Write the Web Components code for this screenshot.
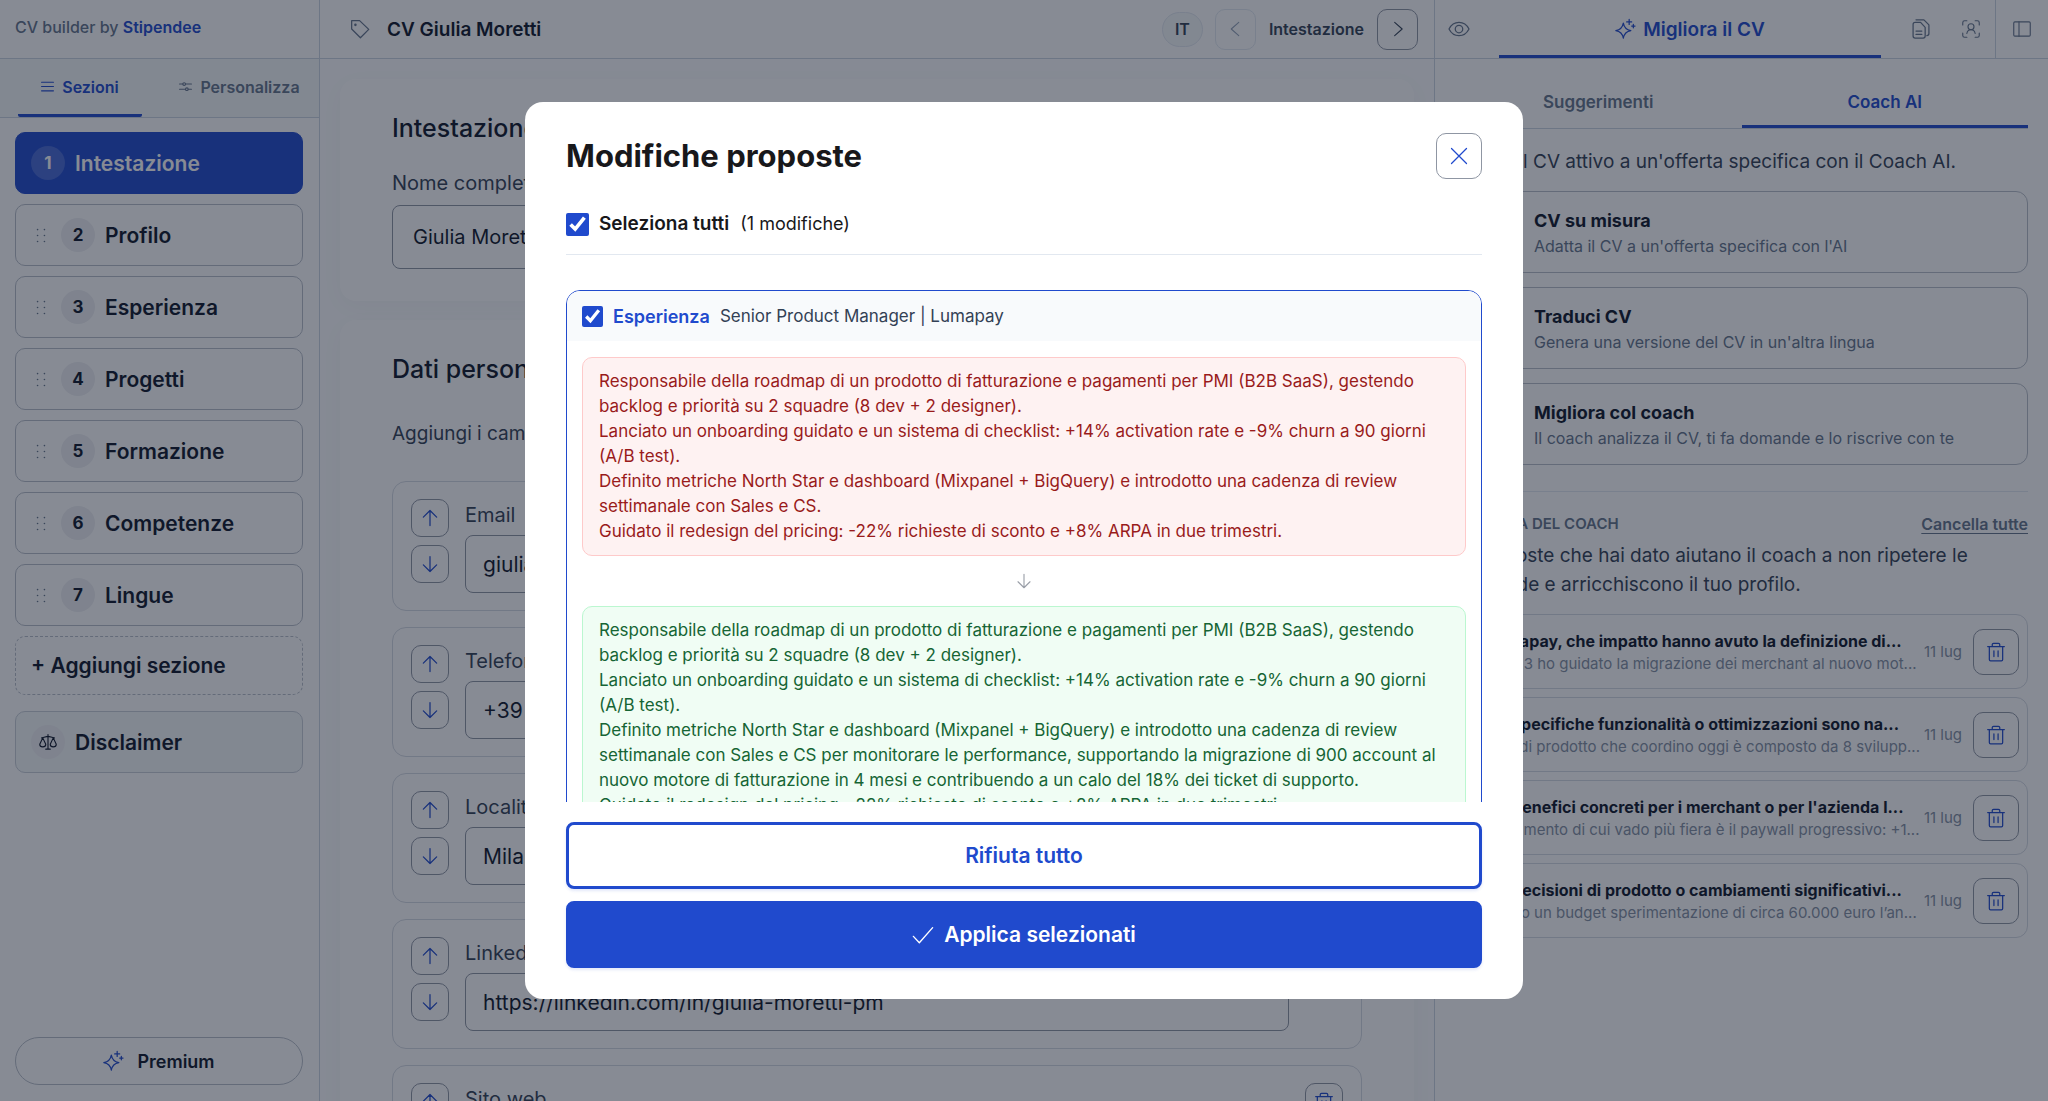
<!DOCTYPE html>
<html lang="it">
<head>
<meta charset="utf-8">
<meta name="viewport" content="width=device-width, initial-scale=1">
<title>CV Giulia Moretti</title>
<style>
    :root{
        --primary: #204acd; --ink: #0f172a; --text: #334155; --muted: #64748b; --soft: #94a3b8;
        --line: #cbd5e1; --line-soft: #e2e8f0; --control: #8f96a3; --edge: #b9bfc9; --surface: #ffffff; --tint: #f8fafc; --band: #f5f8f9;
    }
    body{margin: 0; font-family: Inter, "Liberation Sans", sans-serif; color: var(--ink); background: var(--tint);}
</style>
</head>
<body>
<cv-app>
    <cv-sidebar slot="left"></cv-sidebar>
    <cv-editor slot="center"></cv-editor>
    <cv-coach slot="right"></cv-coach>
</cv-app>
<changes-dialog>
    <change-card section="Esperienza" heading="Senior Product Manager | Lumapay">
        <div slot="before">Responsabile della roadmap di un prodotto di fatturazione e pagamenti per PMI (B2B SaaS), gestendo backlog e priorità su 2 squadre (8 dev + 2 designer).<br>Lanciato un onboarding guidato e un sistema di checklist: +14% activation rate e -9% churn a 90 giorni (A/B test).<br>Definito metriche North Star e dashboard (Mixpanel + BigQuery) e introdotto una cadenza di review settimanale con Sales e CS.<br>Guidato il redesign del pricing: -22% richieste di sconto e +8% ARPA in due trimestri.</div>
        <div slot="after">Responsabile della roadmap di un prodotto di fatturazione e pagamenti per PMI (B2B SaaS), gestendo backlog e priorità su 2 squadre (8 dev + 2 designer).<br>Lanciato un onboarding guidato e un sistema di checklist: +14% activation rate e -9% churn a 90 giorni (A/B test).<br>Definito metriche North Star e dashboard (Mixpanel + BigQuery) e introdotto una cadenza di review settimanale con Sales e CS per monitorare le performance, supportando la migrazione di 900 account al nuovo motore di fatturazione in 4 mesi e contribuendo a un calo del 18% dei ticket di supporto.<br>Guidato il redesign del pricing: -22% richieste di sconto e +8% ARPA in due trimestri.</div>
    </change-card>
</changes-dialog>

<script>
// Attach an open root and fill it from a template
function render(el, html) {
    const template = document.createElement('template');
    template.innerHTML = html;
    el.attachShadow({ mode: 'open' }).appendChild(template.content.cloneNode(true));
}

// All icons live on a 24x24 grid
const ICONS = {
    menu: '<path d="M1 4h22M1 12h22M1 20h22"/>',
    sliders: '<path d="M1 7.500h6M12 7.500h11M1 17h11M17 17h6"/><circle cx="9.500" cy="7.500" r="2.500"/><circle cx="14.500" cy="17" r="2.500"/>',
    grip: '<g fill="currentColor" stroke="none"><circle cx="6.500" cy="2.500" r="1.300"/><circle cx="17.500" cy="2.500" r="1.300"/><circle cx="6.500" cy="12" r="1.300"/><circle cx="17.500" cy="12" r="1.300"/><circle cx="6.500" cy="21.500" r="1.300"/><circle cx="17.500" cy="21.500" r="1.300"/></g>',
    scale: '<path d="M12 2v19.500M9 21.500h6M3.500 6.500C7 6.500 9 4.500 12 4.500s5 2 8.500 2M5 6.500L1 15c0 2.200 1.700 3.500 4 3.500S9 17.200 9 15zM19 6.500L15 15c0 2.200 1.700 3.500 4 3.500s4-1.300 4-3.500z"/>',
    sparkle: '<path d="M10 5c1 5.500 3.500 8 9 9-5.500 1-8 3.500-9 9-1-5.500-3.500-8-9-9 5.500-1 8-3.500 9-9zM17 .5v6M14 3.500h6M22 6.500v4M20 8.500h4"/>',
    tag: '<path d="M2 2h9.500L22.500 12.500l-10 10L2 12z"/><circle cx="6.500" cy="7" r=".8"/>',
    left: '<path d="M16.500 4L7.500 12l9 8"/>',
    right: '<path d="M8 4l9 8-9 8"/>',
    eye: '<path d="M0 12c2.500-5 7-8 12-8s9.500 3 12 8c-2.500 5-7 8-12 8S2.500 17 0 12z"/><circle cx="12" cy="12" r="4.500"/>',
    copy: '<path d="M2.500 6.500c0-1.500 1-2.500 2.500-2.500h6.500l5.500 6v10.500c0 1.500-1 2.500-2.500 2.500H5c-1.500 0-2.500-1-2.500-2.500zM6 1h9.500l6 6v10.500c0 1.500-1 2.500-2.500 2.500M6 14.500h7M6 18.500h7"/>',
    scan: '<path d="M1 6.500v-3C1 2 2 1 3.500 1h3M17.500 1h3C22 1 23 2 23 3.500v3M23 17.500v3c0 1.500-1 2.500-2.500 2.500h-3M6.500 23h-3C2 23 1 22 1 20.500v-3M6.500 18c.5-3 2.500-5 5.500-5s5 2 5.500 5"/><circle cx="12" cy="9" r="4"/>',
    panel: '<rect x="1" y="2.500" width="22" height="19" rx="1.500"/><path d="M8 2.500v19"/>',
    up: '<path d="M12 21V3M4 11l8-8 8 8"/>',
    down: '<path d="M12 3v18M4 13l8 8 8-8"/>',
    trash: '<path d="M2 5.500h20M4 5.500V21c0 .9.600 1.500 1.500 1.500h13c.9 0 1.500-.6 1.500-1.500V5.500M7.500 5.500V3c0-.9.600-1.500 1.500-1.500h6c.9 0 1.500.6 1.500 1.500v2.500M9.500 10.500v7M14.500 10.500v7"/>',
    close: '<path d="M3 3l18 18M21 3L3 21"/>',
    check: '<path d="M1.500 13.500l6.500 7L22.500 4"/>'
};

class CvIcon extends HTMLElement {
    connectedCallback() {
        if (this.shadowRoot) return;
        render(this, `
            <style>
                :host{display: inline-flex; width: 20px; height: 20px; flex: none;}
                svg{width: 100%; height: 100%; overflow: visible; fill: none; stroke: currentColor; stroke-width: var(--stroke, 1.5); stroke-linecap: round; stroke-linejoin: round;}
            </style>
            <svg viewBox="0 0 24 24" aria-hidden="true">${ICONS[this.getAttribute('name')]}</svg>
        `);
    }
}
customElements.define('cv-icon', CvIcon);

// Outlined square button with a single icon
class IconButton extends HTMLElement {
    connectedCallback() {
        if (this.shadowRoot) return;
        render(this, `
            <style>
                :host{display: block; flex: none; width: 46px; height: 46px; color: var(--primary);}
                :host([size="small"]){width: 38px; height: 38px;}
                :host([size="medium"]){width: 41px; height: 41px; color: var(--text); --stroke: 1.3;}
                button{display: flex; align-items: center; justify-content: center; box-sizing: border-box; width: 100%; height: 100%; padding: 0; border: 1px solid var(--control); border-radius: 10px; background: transparent; color: inherit;}
                button:disabled{border-color: var(--line-soft); color: var(--soft);}
            </style>
            <button type="button" aria-label="${this.getAttribute('label')}" ${this.hasAttribute('off') ? 'disabled' : ''}><cv-icon name="${this.getAttribute('icon')}"></cv-icon></button>
        `);
    }
}
customElements.define('icon-button', IconButton);

class CvApp extends HTMLElement {
    constructor() {
        super();
        render(this, `
            <style>
                :host{display: grid; grid-template-columns: 320px minmax(0, 1fr) 614px; height: 100vh; overflow: hidden;}
                ::slotted(*){min-width: 0; min-height: 0;}
            </style>
            <slot name="left"></slot>
            <slot name="center"></slot>
            <slot name="right"></slot>
        `);
    }
}
customElements.define('cv-app', CvApp);

/* ---------- Left sidebar ---------- */

class NavItem extends HTMLElement {
    connectedCallback() {
        if (this.shadowRoot) return;
        const number = this.getAttribute('number');
        const grip = this.hasAttribute('grip') ? '<cv-icon class="grip" name="grip"></cv-icon>' : '';
        const badge = number ? `<span class="badge">${number}</span>` : this.hasAttribute('icon') ? `<span class="badge"><cv-icon name="${this.getAttribute('icon')}"></cv-icon></span>` : '';
        render(this, `
            <style>
                :host{display: block;}
                button{display: flex; align-items: center; gap: 10px; box-sizing: border-box; width: 100%; height: 62px; padding: 0 15px; border: 1px solid var(--edge); border-radius: 10px; background: var(--surface); color: var(--ink); font: 600 21px Inter, sans-serif; text-align: left;}
                .badge{display: flex; align-items: center; justify-content: center; width: 34px; height: 34px; border-radius: 50%; background: #eeeff2; font-size: 17px; font-weight: 700;}
                .badge cv-icon{width: 18px; height: 18px;}
                .grip{color: var(--muted); width: 20px; height: 15px;}
                :host([active]) button{background: var(--primary); border-color: var(--primary); color: #fff;}
                :host([active]) .badge{background: rgba(255, 255, 255, .18);}
                :host([dashed]) button{border-style: dashed; height: 59px;}
                :host([muted]) button{background: var(--band); border-color: #c8ced7;}
            </style>
            <button type="button">${grip}${badge}<slot></slot></button>
        `);
    }
}
customElements.define('nav-item', NavItem);

class CvSidebar extends HTMLElement {
    constructor() {
        super();
        render(this, `
            <style>
                :host{display: flex; flex-direction: column; box-sizing: border-box; border-right: 1px solid var(--line); background: var(--surface);}
                .brand{display: flex; align-items: center; box-sizing: border-box; height: 59px; padding: 0 15px 4px; border-bottom: 1px solid var(--line); font-size: 16px; font-weight: 500; color: var(--muted);}
                .brand a{color: var(--primary); font-weight: 600; text-decoration: none;}
                .tabs{display: flex; box-sizing: border-box; height: 59px; padding: 0 0 0 18px; gap: 18px; border-bottom: 1px solid var(--line); background: var(--band);}
                .tabs button{display: flex; align-items: center; justify-content: center; gap: 8px; flex: 1; border: 0; border-bottom: 3px solid transparent; border-radius: 2px; padding: 0; background: none; color: var(--muted); font: 600 16px Inter, sans-serif;}
                .tabs button[aria-selected="true"]{flex: 0 0 124px; color: var(--primary); border-color: var(--primary);}
                .tabs cv-icon{width: 13px; height: 13px; --stroke: 2;}
                nav{display: flex; flex-direction: column; gap: 10px; padding: 14px 16px 0 15px; flex: 1;}
                nav .last{margin-top: 6px;}
                .premium{display: flex; align-items: center; justify-content: center; gap: 14px; box-sizing: border-box; height: 48px; margin: 0 16px 16px 15px; border: 1px solid var(--edge); border-radius: 24px; background: var(--surface); color: var(--ink); font: 600 18px Inter, sans-serif;}
                .premium cv-icon{color: var(--primary);}
            </style>
            <div class="brand"><span>CV builder by <a href="#">Stipendee</a></span></div>
            <div class="tabs" role="tablist">
                <button type="button" role="tab" aria-selected="true"><cv-icon name="menu"></cv-icon>Sezioni</button>
                <button type="button" role="tab" aria-selected="false"><cv-icon name="sliders"></cv-icon>Personalizza</button>
            </div>
            <nav>
                <nav-item number="1" active>Intestazione</nav-item>
                <nav-item number="2" grip>Profilo</nav-item>
                <nav-item number="3" grip>Esperienza</nav-item>
                <nav-item number="4" grip>Progetti</nav-item>
                <nav-item number="5" grip>Formazione</nav-item>
                <nav-item number="6" grip>Competenze</nav-item>
                <nav-item number="7" grip>Lingue</nav-item>
                <nav-item dashed>+ Aggiungi sezione</nav-item>
                <nav-item class="last" icon="scale" muted>Disclaimer</nav-item>
            </nav>
            <button class="premium" type="button"><cv-icon name="sparkle"></cv-icon>Premium</button>
        `);
    }
}
customElements.define('cv-sidebar', CvSidebar);

/* ---------- Editor ---------- */

class ContactField extends HTMLElement {
    connectedCallback() {
        if (this.shadowRoot) return;
        render(this, `
            <style>
                :host{display: flex; gap: 16px; box-sizing: border-box; height: 130px; padding: 17px 18px; border: 1px solid #d5dae2; border-radius: 14px; background: var(--surface);}
                .move{display: flex; flex-direction: column; gap: 8px;}
                .field{display: flex; flex-direction: column; flex: 1; gap: 4px;}
                label{font-size: 20px; line-height: 32px; color: var(--text);}
                input{box-sizing: border-box; width: 100%; height: 58px; padding: 0 17px; border: 1px solid var(--control); border-radius: 8px; background: var(--surface); color: var(--ink); font: 400 21px Inter, sans-serif;}
            </style>
            <div class="move">
                <icon-button size="small" icon="up" label="Sposta su"></icon-button>
                <icon-button size="small" icon="down" label="Sposta giù"></icon-button>
            </div>
            <div class="field">
                <label for="value">${this.getAttribute('label')}</label>
                <input id="value" type="text" value="${this.getAttribute('value')}">
            </div>
            <icon-button size="small" icon="trash" label="Elimina"></icon-button>
        `);
    }
}
customElements.define('contact-field', ContactField);

class FormCard extends HTMLElement {
    constructor() {
        super();
        render(this, `
            <style>
                :host{display: block; padding: 32px 52px; border-radius: 16px; background: var(--surface); box-shadow: 0 6px 24px rgba(15, 23, 42, .03);}
            </style>
            <slot></slot>
        `);
    }
}
customElements.define('form-card', FormCard);

class CvEditor extends HTMLElement {
    constructor() {
        super();
        render(this, `
            <style>
                :host{display: flex; flex-direction: column; background: #fcfdfe;}
                header{display: flex; align-items: center; flex: none; box-sizing: border-box; height: 59px; padding: 0 16px 0 30px; border-bottom: 1px solid var(--line); background: var(--surface);}
                header > cv-icon{color: var(--muted);}
                h1{flex: 1; margin: 0 0 0 17px; font-size: 19px; font-weight: 600;}
                .lang{display: flex; align-items: center; justify-content: center; box-sizing: border-box; width: 41px; height: 35px; margin-right: 12px; padding: 0; border: 1px solid var(--line-soft); border-radius: 18px; background: var(--band); color: var(--text); font: 600 16px Inter, sans-serif;}
                .step{margin: 0 13px; font-size: 16px; font-weight: 600; color: var(--text);}
                main{display: flex; flex-direction: column; gap: 19px; padding: 20px; overflow: hidden;}
                h2{margin: 0; font-size: 25px; line-height: 34px; font-weight: 500;}
                label{display: block; margin: 22px 0 6px; font-size: 20px; line-height: 32px; color: var(--text);}
                input{box-sizing: border-box; width: 100%; height: 64px; padding: 0 20px; border: 1px solid var(--control); border-radius: 8px; background: var(--surface); color: var(--ink); font: 400 20px Inter, sans-serif;}
                p{margin: 32px 0; font-size: 19px; line-height: 31px; color: var(--text);}
                .fields{display: flex; flex-direction: column; gap: 16px;}
            </style>
            <header>
                <cv-icon name="tag"></cv-icon>
                <h1>CV Giulia Moretti</h1>
                <button class="lang" type="button">IT</button>
                <icon-button size="medium" icon="left" label="Precedente" off></icon-button>
                <span class="step">Intestazione</span>
                <icon-button size="medium" icon="right" label="Successiva"></icon-button>
            </header>
            <main>
                <form-card>
                    <h2>Intestazione</h2>
                    <label for="name">Nome completo</label>
                    <input id="name" type="text" value="Giulia Moretti">
                </form-card>
                <form-card>
                    <h2>Dati personali</h2>
                    <p>Aggiungi i campi che vuoi mostrare.</p>
                    <div class="fields">
                        <contact-field label="Email" value="giulia.moretti@email.it"></contact-field>
                        <contact-field label="Telefono" value="+39 333 123 4567"></contact-field>
                        <contact-field label="Località" value="Milano, Italia"></contact-field>
                        <contact-field label="LinkedIn" value="https://linkedin.com/in/giulia-moretti-pm"></contact-field>
                        <contact-field label="Sito web" value=""></contact-field>
                    </div>
                </form-card>
            </main>
        `);
    }
}
customElements.define('cv-editor', CvEditor);

/* ---------- Coach panel ---------- */

class CoachAction extends HTMLElement {
    constructor() {
        super();
        render(this, `
            <style>
                :host{display: block;}
                button{display: flex; flex-direction: column; justify-content: center; box-sizing: border-box; width: 100%; height: 82px; padding: 2px 16px 0 78px; border: 1px solid var(--edge); border-radius: 12px; background: var(--surface); text-align: left; font: 400 16px/24px Inter, sans-serif; color: var(--muted);}
                .title{font-size: 18px; line-height: 26px; font-weight: 700; color: var(--ink);}
            </style>
            <button type="button"><span class="title"><slot name="title"></slot></span><slot></slot></button>
        `);
    }
}
customElements.define('coach-action', CoachAction);

class MemoryRow extends HTMLElement {
    constructor() {
        super();
        render(this, `
            <style>
                :host{display: flex; align-items: center; gap: 11px; box-sizing: border-box; height: 75px; padding: 0 8px 0 12px; border: 1px solid #d5dae2; border-radius: 12px; background: var(--surface);}
                .body{flex: 1; min-width: 0; font-size: 15px; line-height: 22px; color: #8490a3; white-space: nowrap;}
                .title{font-size: 16px; line-height: 24px; font-weight: 700; color: var(--ink);}
                time{font-size: 15px; color: #8490a3;}
            </style>
            <div class="body">
                <div class="title"><slot name="title"></slot></div>
                <div><slot></slot></div>
            </div>
            <time>11 lug</time>
            <icon-button icon="trash" label="Elimina risposta"></icon-button>
        `);
    }
}
customElements.define('memory-row', MemoryRow);

class CvCoach extends HTMLElement {
    constructor() {
        super();
        render(this, `
            <style>
                :host{display: flex; flex-direction: column; border-left: 1px solid var(--line); background: var(--surface);}
                button{border: 0; padding: 0; background: none; font: 600 17px Inter, sans-serif; color: var(--muted);}
                header{display: flex; flex: none; box-sizing: border-box; height: 59px; border-bottom: 1px solid var(--line);}
                header button{display: flex; align-items: center; justify-content: center; box-sizing: border-box; width: 48px;}
                header .view{width: 64px; padding-right: 16px;}
                header .current{flex: 1; gap: 8px; padding-top: 3px; border-bottom: 3px solid var(--primary); color: var(--primary); font-size: 19px;}
                header .copy{width: 66px; padding-left: 14px;}
                header .panel{width: 53px; border-left: 1px solid var(--line);}
                header .panel cv-icon, header .scan cv-icon{width: 18px; height: 18px;}
                .tabs{display: flex; margin: 16px 20px 0; border-bottom: 1px solid var(--line);}
                .tabs button{flex: 1; height: 53px; padding-top: 3px; border-bottom: 3px solid transparent;}
                .tabs button[aria-selected="true"]{color: var(--primary); border-color: var(--primary);}
                section{display: flex; flex-direction: column; margin: 0 20px;}
                p{margin: 0; font-size: 19px; line-height: 29px; color: var(--text);}
                .actions{gap: 14px; padding: 18px 0 26px; border-bottom: 1px solid var(--line-soft);}
                .actions p{line-height: 30px;}
                .head{display: flex; align-items: center; justify-content: space-between; padding: 20px 0 5px;}
                h3{margin: 0; font-size: 15px; line-height: 24px; font-weight: 600; color: var(--muted); text-transform: uppercase;}
                .head button{font-size: 16px; text-decoration: underline; text-underline-offset: 3px;}
                .rows{display: flex; flex-direction: column; gap: 8px; margin-top: 15px;}
            </style>
            <header>
                <button class="view" type="button" aria-label="Anteprima"><cv-icon name="eye"></cv-icon></button>
                <button class="current" type="button"><cv-icon name="sparkle"></cv-icon>Migliora il CV</button>
                <button class="copy" type="button" aria-label="Copia"><cv-icon name="copy"></cv-icon></button>
                <button class="scan" type="button" aria-label="Profilo"><cv-icon name="scan"></cv-icon></button>
                <button class="panel" type="button" aria-label="Pannello"><cv-icon name="panel"></cv-icon></button>
            </header>
            <div class="tabs" role="tablist">
                <button type="button" role="tab" aria-selected="false">Suggerimenti</button>
                <button type="button" role="tab" aria-selected="true">Coach AI</button>
            </div>
            <section class="actions">
                <p>Adatta il CV attivo a un'offerta specifica con il Coach AI.</p>
                <coach-action><span slot="title">CV su misura</span>Adatta il CV a un'offerta specifica con l'AI</coach-action>
                <coach-action><span slot="title">Traduci CV</span>Genera una versione del CV in un'altra lingua</coach-action>
                <coach-action><span slot="title">Migliora col coach</span>Il coach analizza il CV, ti fa domande e lo riscrive con te</coach-action>
            </section>
            <section>
                <div class="head"><h3>Memoria del coach</h3><button type="button">Cancella tutte</button></div>
                <p>Le risposte che hai dato aiutano il coach a non ripetere le domande e arricchiscono il tuo profilo.</p>
                <div class="rows">
                    <memory-row><span slot="title">In Lumapay, che impatto hanno avuto la definizione di...</span>Nel 2023 ho guidato la migrazione dei merchant al nuovo mot...</memory-row>
                    <memory-row><span slot="title">Quali specifiche funzionalità o ottimizzazioni sono na...</span>Il team di prodotto che coordino oggi è composto da 8 svilupp...</memory-row>
                    <memory-row><span slot="title">Quali benefici concreti per i merchant o per l'azienda l...</span>L'esperimento di cui vado più fiera è il paywall progressivo: +1...</memory-row>
                    <memory-row><span slot="title">Quali decisioni di prodotto o cambiamenti significativi...</span>Gestisco un budget sperimentazione di circa 60.000 euro l’an...</memory-row>
                </div>
            </section>
        `);
    }
}
customElements.define('cv-coach', CvCoach);

/* ---------- Proposed changes dialog ---------- */

class ChangeCard extends HTMLElement {
    connectedCallback() {
        if (this.shadowRoot) return;
        render(this, `
            <style>
                :host{display: block; border: 1px solid var(--primary); border-radius: 14px; overflow: hidden; font-size: 17px; line-height: 25px;}
                label{display: flex; align-items: center; height: 50px; padding: 0 15px; background: var(--tint); color: var(--text);}
                input{width: 21px; height: 21px; margin: 0 10px 0 0; accent-color: var(--primary);}
                b{margin-right: 10px; font-size: 18px; font-weight: 600; color: var(--primary);}
                .body{display: flex; flex-direction: column; align-items: center; gap: 16px; padding: 16px 15px;}
                .box{box-sizing: border-box; width: 100%; padding: 11px 16px; border: 1px solid; border-radius: 10px;}
                .before{background: #fef2f2; border-color: #fecaca; color: #991b1b;}
                .after{background: #f0fdf4; border-color: #bbf7d0; color: #166534;}
                .body cv-icon{width: 18px; height: 18px; color: #9a9fa8;}
            </style>
            <label><input type="checkbox" checked><b>${this.getAttribute('section')}</b>${this.getAttribute('heading')}</label>
            <div class="body">
                <div class="box before"><slot name="before"></slot></div>
                <cv-icon name="down"></cv-icon>
                <div class="box after"><slot name="after"></slot></div>
            </div>
        `);
    }
}
customElements.define('change-card', ChangeCard);

class ChangesDialog extends HTMLElement {
    constructor() {
        super();
        render(this, `
            <style>
                :host{position: fixed; inset: 0; display: flex; align-items: center; justify-content: center; background: rgba(15, 23, 42, .5);}
                .modal{display: flex; flex-direction: column; box-sizing: border-box; width: 998px; max-width: 96%; max-height: calc(100vh - 204px); padding: 31px 41px; border-radius: 18px; background: #fff; color: #18181b;}
                .top{display: flex; align-items: center; justify-content: space-between;}
                h2{margin: 0; font-size: 31px; line-height: 44px; font-weight: 700;}
                .all{display: flex; align-items: center; padding: 32px 0 17px; border-bottom: 1px solid var(--line-soft); font-size: 18px; line-height: 26px;}
                .all input{width: 23px; height: 23px; margin: 0 10px 0 0; accent-color: var(--primary);}
                .all b{margin-right: 11px; font-size: 19px; font-weight: 600;}
                .scroll{flex: 1; min-height: 0; margin-bottom: 20px; padding-top: 35px; overflow: hidden;}
                .actions{display: flex; flex-direction: column; gap: 12px;}
                .actions button{display: flex; align-items: center; justify-content: center; gap: 10px; box-sizing: border-box; height: 67px; border: 3px solid var(--primary); border-radius: 8px; background: #fff; color: var(--primary); font: 600 21px Inter, sans-serif; box-shadow: 0 2px 3px rgba(32, 74, 205, .12);}
                .actions .apply{background: var(--primary); color: #fff;}
                .actions cv-icon{width: 22px; height: 22px;}
            </style>
            <div class="modal" role="dialog" aria-modal="true" aria-labelledby="title">
                <div class="top"><h2 id="title">Modifiche proposte</h2><icon-button icon="close" label="Chiudi"></icon-button></div>
                <label class="all"><input type="checkbox" checked><b>Seleziona tutti</b>(1 modifiche)</label>
                <div class="scroll"><slot></slot></div>
                <div class="actions">
                    <button type="button">Rifiuta tutto</button>
                    <button class="apply" type="button"><cv-icon name="check"></cv-icon>Applica selezionati</button>
                </div>
            </div>
        `);
    }
}
customElements.define('changes-dialog', ChangesDialog);
</script>
</body>
</html>
